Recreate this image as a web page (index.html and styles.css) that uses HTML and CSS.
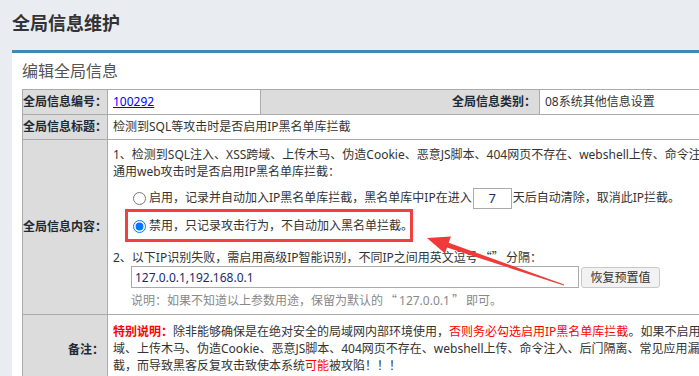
FILE: index.html
```html
<!DOCTYPE html>
<html>
<head>
<meta charset="UTF-8">
<title>全局信息维护</title>
<link rel="stylesheet" href="styles.css">
</head>
<body>
<div class="page-title">全局信息维护</div>
<div class="panel">
	<h2 class="panel-title">编辑全局信息</h2>
	<table class="form-table">
		<colgroup>
			<col class="c1"><col class="c2"><col class="c3"><col class="c4">
		</colgroup>
		<tr class="row-s">
			<th>全局信息编号：</th>
			<td><a href="#">100292</a></td>
			<th>全局信息类别：</th>
			<td>08系统其他信息设置</td>
		</tr>
		<tr class="row-s">
			<th>全局信息标题：</th>
			<td colspan="3">检测到SQL等攻击时是否启用IP黑名单库拦截</td>
		</tr>
		<tr>
			<th>全局信息内容：</th>
			<td colspan="3" class="content">
				<div class="desc">1、检测到SQL注入、XSS跨域、上传木马、伪造Cookie、恶意JS脚本、404网页不存在、webshell上传、命令注入、后门隔离、常见应用漏洞等<br>通用web攻击时是否启用IP黑名单库拦截：</div>
				<div class="radio-row first">
					<label><input type="radio" name="ipblack">启用，记录并自动加入IP黑名单库拦截，黑名单库中IP在进入</label><input type="text" class="days" value="7">天后自动清除，取消此IP拦截。
				</div>
				<div class="radio-row">
					<label><input type="radio" name="ipblack" checked>禁用，只记录攻击行为，不自动加入黑名单拦截。</label>
				</div>
				<div class="desc step2">2、以下IP识别失败，需启用高级IP智能识别，不同IP之间用英文逗号<span class="cjk">“”</span>分隔：</div>
				<div class="ip-row">
					<input type="text" class="ip-input" value="127.0.0.1,192.168.0.1"><button class="btn">恢复预置值</button>
				</div>
				<div class="tip">说明：如果不知道以上参数用途，保留为默认的<span class="cjk">“</span>127.0.0.1<span class="cjk">”</span>即可。</div>
			</td>
		</tr>
		<tr>
			<th>备注：</th>
			<td colspan="3" class="remark">
				<span class="red bold">特别说明：</span>除非能够确保是在绝对安全的局域网内部环境使用，<span class="red">否则务必勾选启用IP黑名单库拦截</span>。如果不启用IP黑名单库拦截，当发生SQL注入、XSS跨<br>域、上传木马、伪造Cookie、恶意JS脚本、404网页不存在、webshell上传、命令注入、后门隔离、常见应用漏洞等攻击时将不会自动拦<br>截，而导致黑客反复攻击致使本系统<span class="red">可能</span>被攻陷！！！
			</td>
		</tr>
	</table>
</div>

<!-- 标注 -->
<div class="mark-box"></div>
<svg class="mark-arrow" width="699" height="376" viewBox="0 0 699 376">
	<polygon points="427,238 451,236.5 448.6,242.8 564.2,284.4 563.8,285.6 447,247.6 445,253.6" fill="#f03a3a"/>
</svg>
</body>
</html>
```

FILE: styles.css
```css
html,body{margin:0;padding:0}
body{background:#e9ecf1;font-family:"Noto Sans","Noto Sans CJK SC",sans-serif;font-size:12px;color:#333;position:relative;width:699px;height:376px;overflow:hidden}
.cjk{font-family:"Noto Sans CJK SC",sans-serif;margin:0 2px}

.page-title{font-size:18px;font-weight:bold;color:#333;line-height:24px;padding:11px 12px 15px}

.panel{margin-left:12px;width:760px;background:#fff;border-top:3px solid #3b8db8;padding:0 10px 20px}
.panel-title{margin:0;padding-top:6px;font-size:16px;font-weight:normal;color:#555;line-height:24px;height:30px}

.form-table{border-collapse:collapse;width:760px;table-layout:fixed}
.form-table col.c1{width:85px}
.form-table col.c2{width:153px}
.form-table col.c3{width:279px}
.form-table th,.form-table td{border:1px solid #aaa;line-height:18px;white-space:nowrap}
.form-table th{background:#dcdcdc;color:#1e2a33;font-weight:bold;text-align:right;padding:3px 3px 3px 0}
.form-table td{padding:3px 5px;text-align:left;vertical-align:middle}
.row-s td,.row-s th{height:18px}
.form-table a{color:#00f}

.content{padding:6px 5px 5px !important;vertical-align:top !important}
.desc{line-height:17px}
.step2{margin-top:8px}
.radio-row{height:28px;line-height:28px;padding-left:20px;display:flex;align-items:center}
.radio-row.first{margin-top:4px}
.radio-row label{display:flex;align-items:center}
.radio-row input[type="radio"]{margin:0 3px 0 0;width:13px;height:13px}
.days{width:31px;height:19px;border:1px solid #aaa;padding:0 3px;margin:0 1px;text-align:center;color:#1a2b6b;font-family:inherit;font-size:13px}
.ip-row{display:flex;align-items:center;height:22px;padding-left:18px}
.ip-input{box-sizing:border-box;width:448px;height:22px;border:1px solid #aaa;padding:0 3px;font-family:inherit;font-size:12px;color:#1a2b6b}
.btn{box-sizing:border-box;margin-left:2px;width:79px;height:21px;background:#f2f2f2;border:1px solid #c8c8c8;border-radius:3px;font-family:inherit;font-size:12px;color:#333;padding:0}
.tip{margin-top:3px;padding-left:18px;color:#888;line-height:17px}

.remark{padding:8px 5px 10px !important;line-height:17px !important}
.red{color:#f00}
.bold{font-weight:bold}

.mark-box{position:absolute;left:125px;top:209px;width:282px;height:27px;border:3px solid #f04040}
.mark-arrow{position:absolute;left:0;top:0}
```
